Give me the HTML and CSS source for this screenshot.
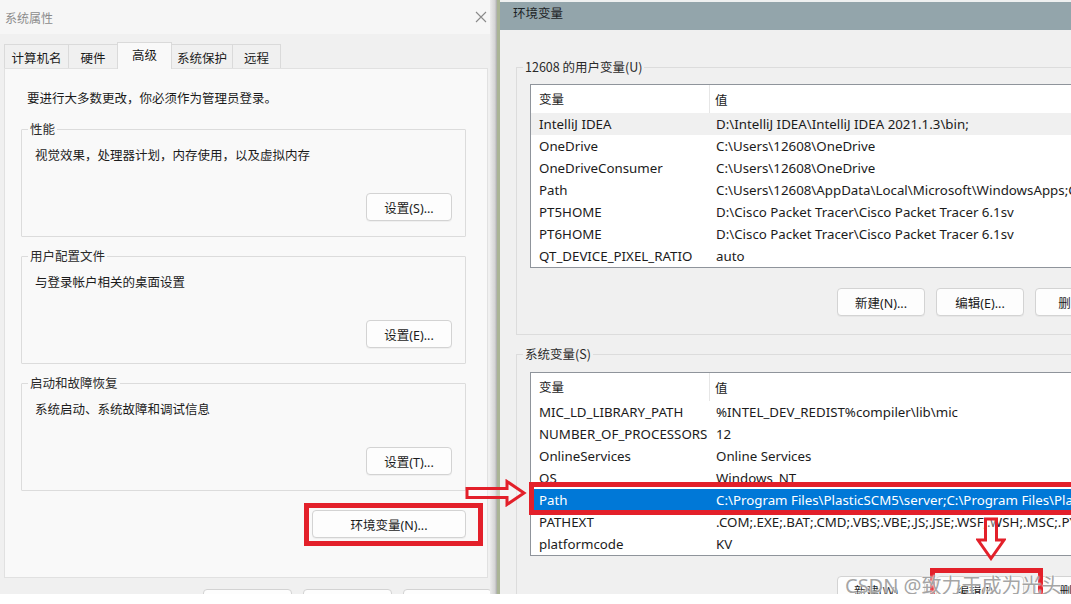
FILE: index.html
```html
<!DOCTYPE html>
<html lang="zh-CN">
<head>
<meta charset="utf-8">
<title>系统属性 / 环境变量</title>
<link rel="stylesheet" href="styles.css">
</head>
<body>
<div class="screen">
  <div class="main">
    <section class="sys">
      <div class="sys-title">
        <span class="sys-title-text">系统属性</span>
        <svg class="close" width="12" height="12" viewBox="0 0 12 12"><path d="M1 1 L11 11 M11 1 L1 11" stroke="#8a8a8a" stroke-width="1.1" fill="none"/></svg>
      </div>
      <div class="tabs">
        <div class="tab t1">计算机名</div>
        <div class="tab t2">硬件</div>
        <div class="tab t3 active">高级</div>
        <div class="tab t4">系统保护</div>
        <div class="tab t5">远程</div>
      </div>
      <div class="panel">
        <p class="note">要进行大多数更改，你必须作为管理员登录。</p>
        <fieldset class="grp">
          <legend>性能</legend>
          <div class="grp-body">
            <p class="desc">视觉效果，处理器计划，内存使用，以及虚拟内存</p>
            <button class="btn set">设置(S)...</button>
          </div>
        </fieldset>
        <fieldset class="grp">
          <legend>用户配置文件</legend>
          <div class="grp-body">
            <p class="desc">与登录帐户相关的桌面设置</p>
            <button class="btn set">设置(E)...</button>
          </div>
        </fieldset>
        <fieldset class="grp">
          <legend>启动和故障恢复</legend>
          <div class="grp-body">
            <p class="desc">系统启动、系统故障和调试信息</p>
            <button class="btn set">设置(T)...</button>
          </div>
        </fieldset>
        <div class="env-row"><button class="btn envbtn">环境变量(N)...</button></div>
      </div>
      <div class="sys-footer">
        <button class="btn fbtn">确定</button>
        <button class="btn fbtn">取消</button>
        <button class="btn fbtn">应用(A)</button>
      </div>
    </section>
    <div class="divider"></div>
    <section class="env">
      <div class="env-title">环境变量</div>
      <div class="env-body">
        <fieldset class="grp2">
          <legend>12608 的用户变量(U)</legend>
          <div class="list">
            <div class="row head"><span class="c1">变量</span><span class="c2">值</span></div>
            <div class="row hover"><span class="c1">IntelliJ IDEA</span><span class="c2">D:\IntelliJ IDEA\IntelliJ IDEA 2021.1.3\bin;</span></div>
            <div class="row"><span class="c1">OneDrive</span><span class="c2">C:\Users\12608\OneDrive</span></div>
            <div class="row"><span class="c1">OneDriveConsumer</span><span class="c2">C:\Users\12608\OneDrive</span></div>
            <div class="row"><span class="c1">Path</span><span class="c2">C:\Users\12608\AppData\Local\Microsoft\WindowsApps;C:\Users</span></div>
            <div class="row"><span class="c1">PT5HOME</span><span class="c2">D:\Cisco Packet Tracer\Cisco Packet Tracer 6.1sv</span></div>
            <div class="row"><span class="c1">PT6HOME</span><span class="c2">D:\Cisco Packet Tracer\Cisco Packet Tracer 6.1sv</span></div>
            <div class="row"><span class="c1">QT_DEVICE_PIXEL_RATIO</span><span class="c2">auto</span></div>
          </div>
          <div class="btns">
            <button class="btn lbtn">新建(N)...</button>
            <button class="btn lbtn">编辑(E)...</button>
            <button class="btn lbtn">删除(D)</button>
          </div>
        </fieldset>
        <fieldset class="grp2 sysgrp">
          <legend>系统变量(S)</legend>
          <div class="list">
            <div class="row head"><span class="c1">变量</span><span class="c2">值</span></div>
            <div class="row"><span class="c1">MIC_LD_LIBRARY_PATH</span><span class="c2">%INTEL_DEV_REDIST%compiler\lib\mic</span></div>
            <div class="row"><span class="c1">NUMBER_OF_PROCESSORS</span><span class="c2">12</span></div>
            <div class="row"><span class="c1">OnlineServices</span><span class="c2">Online Services</span></div>
            <div class="row"><span class="c1">OS</span><span class="c2">Windows_NT</span></div>
            <div class="row sel"><span class="c1">Path</span><span class="c2">C:\Program Files\PlasticSCM5\server;C:\Program Files\PlasticSCM5\client</span></div>
            <div class="row"><span class="c1">PATHEXT</span><span class="c2">.COM;.EXE;.BAT;.CMD;.VBS;.VBE;.JS;.JSE;.WSF;.WSH;.MSC;.PY</span></div>
            <div class="row"><span class="c1">platformcode</span><span class="c2">KV</span></div>
          </div>
          <div class="btns">
            <button class="btn lbtn">新建(W)...</button>
            <button class="btn lbtn">编辑(I)...</button>
            <button class="btn lbtn">删除(L)</button>
          </div>
        </fieldset>
      </div>
    </section>

    <div class="mark mark-env"></div>
    <div class="mark mark-path"></div>
    <div class="mark mark-edit"></div>
    <svg class="arrow arrow-right" width="62" height="28" viewBox="0 0 62 28"><path d="M2 9.5 H42 V2.5 L59 14 L42 25.5 V18.5 H2 Z" fill="rgba(255,255,255,0.35)" stroke="#e3202a" stroke-width="3" stroke-linejoin="miter"/></svg>
    <svg class="arrow arrow-down" width="30" height="44" viewBox="0 0 30 44"><path d="M9.5 2 H20.5 V23 H28 L15 41.5 L2 23 H9.5 Z" fill="rgba(255,255,255,0.35)" stroke="#e3202a" stroke-width="3" stroke-linejoin="miter"/></svg>
    <div class="watermark">CSDN @致力于成为光头</div>
  </div>
  <div class="strip"></div>
</div>
</body>
</html>
```

FILE: styles.css
```css
* { box-sizing: border-box; }
html, body { margin: 0; padding: 0; background: #ffffff; }
body {
  font-family: "Noto Sans", "Noto Sans CJK SC", sans-serif;
  font-size: 12.5px;
  color: #1b1b1b;
}
.screen { width: 1071px; height: 604px; display: flex; flex-direction: column; }
.main { position: relative; height: 594px; flex: none; display: flex; overflow: hidden; }
.strip { height: 10px; flex: none; background: #ffffff; }

p { margin: 0; }
.btn {
  font-family: "Noto Sans", "Noto Sans CJK SC", sans-serif;
  font-size: 12.5px;
  color: #1b1b1b;
  background: #fdfdfd;
  border: 1px solid #d3d3d3;
  border-radius: 4px;
  height: 28px;
  padding: 0;
  box-shadow: 0 1px 0 rgba(0,0,0,0.04);
}

/* ---------- system properties dialog ---------- */
.sys { width: 490px; flex: none; display: flex; flex-direction: column; background: #f0f0f0; overflow: hidden; }
.sys > * { flex: none; }
.sys-title {
  height: 34px; background: #f6f6f6;
  display: flex; align-items: center; justify-content: space-between;
  padding: 0 3px 0 5px;
}
.sys-title-text { font-size: 12px; color: #8c8c8c; font-family: "Noto Sans CJK SC", sans-serif; }
.tabs { height: 34px; display: flex; align-items: flex-end; padding-left: 4px; }
.tab {
  height: 24px; line-height: 25px; text-align: center;
  font-family: "Noto Sans CJK SC", sans-serif; font-size: 12.5px;
  border: 1px solid #dadada; border-bottom: none; background: #f0f0f0;
  margin-right: -1px;
}
.t1 { width: 65px; }
.t2 { width: 50px; }
.t3 { width: 55px; }
.t4 { width: 62px; }
.t5 { width: 49px; }
.tab.active { height: 27px; line-height: 23px; background: #f9f9f9; position: relative; z-index: 1; margin-bottom: -1px; }
.panel {
  margin: 0 2px 0 4px; height: 510px;
  background: #f9f9f9; border: 1px solid #e1e1e1;
  padding: 20px 20px 0 16px;
  display: flex; flex-direction: column;
}
.note { line-height: 18px; padding-left: 6px; font-family: "Noto Sans CJK SC", sans-serif; }
.grp {
  margin: 13px 0 0 0; padding: 0; width: 445px; flex: none;
  border: 1px solid #dcdcdc; border-radius: 1px;
}
.grp + .grp { margin-top: 10px; }
.grp legend {
  margin-left: 6px; padding: 0 2px; line-height: 18px;
  font-family: "Noto Sans CJK SC", sans-serif; color: #2a2a2a;
}
.grp-body { height: 98px; display: flex; flex-direction: column; padding: 8px 13px 15px 13px; }
.desc { line-height: 18px; font-family: "Noto Sans CJK SC", sans-serif; }
.btn.set { width: 86px; margin-top: auto; align-self: flex-end; }
.env-row { display: flex; justify-content: flex-end; padding-top: 19px; padding-right: 1px; }
.btn.envbtn { width: 154px; flex: none; }
.sys-footer { display: flex; gap: 11px; padding: 11px 0 0 203px; }
.btn.fbtn { width: 89px; flex: none; }

/* ---------- divider ---------- */
.divider {
  width: 7px; flex: none;
  background: linear-gradient(to right, #ececec, #d4d4d4 70%, #a9a9a9);
}

/* ---------- environment variables dialog ---------- */
.env {
  flex: 1; min-width: 0; display: flex; flex-direction: column;
  background: #f0f0f0; border-left: 3px solid #aab495;
}
.env-title {
  height: 30px; flex: none; border-top: 2px solid #eef0f0;
  background: #93a5ab; padding-left: 13px;
  line-height: 22px; font-family: "Noto Sans CJK SC", sans-serif; color: #1d2326;
}
.env-body { padding: 28px 0 0 16px; }
.grp2 {
  margin: 0; padding: 0 0 18px 13px; width: 580px;
  border: 1px solid #dcdcdc; border-right: none;
}
.grp2 legend {
  margin-left: -7px; padding: 0 2px; line-height: 18px;
  font-family: "Noto Sans CJK SC", sans-serif; color: #2a2a2a;
}
.sysgrp { margin-top: 10px; }
.list {
  margin-top: 8px; width: 560px;
  background: #ffffff; border: 1px solid #8f949b; border-right: none;
  font-size: 13.3px;
}
.sysgrp .list { margin-top: 9px; }
.row { display: flex; height: 22px; align-items: center; white-space: nowrap; }
.row.head { height: 28px; font-size: 12.5px; }
.row .c1 { width: 179px; flex: none; padding-left: 8px; overflow: hidden; }
.row .c2 { flex: 1; padding-left: 6px; overflow: hidden; }
.row.head .c1 { border-right: 1px solid #e6e6e6; height: 28px; line-height: 28px; }
.row.head .c2 { padding-left: 5px; }
.row.head span { font-family: "Noto Sans CJK SC", sans-serif; }
.row.hover { background: #f0f0f0; }
.row.sel { background: #0078d7; color: #ffffff; }
.btns { display: flex; gap: 11px; margin-top: 20px; padding-left: 307px; }
.btn.lbtn { width: 88px; flex: none; }

/* ---------- annotations ---------- */
.mark { position: absolute; border: 5px solid #e3202a; }
.mark-env { left: 304px; top: 503px; width: 179px; height: 43px; }
.mark-path { left: 529px; top: 482px; width: 560px; height: 33px; }
.mark-edit { left: 930px; top: 568px; width: 113px; height: 40px; }
.arrow { position: absolute; }
.arrow-right { left: 465px; top: 479px; }
.arrow-down { left: 976px; top: 517px; }
.watermark {
  position: absolute; left: 845px; top: 573px;
  font-family: "Noto Sans", "Noto Sans CJK SC", sans-serif; font-size: 20px; line-height: 26px;
  color: rgba(140,140,140,0.8);
  text-shadow: 0 0 2px #ffffff, 0 0 2px #ffffff;
  white-space: nowrap;
}
```
